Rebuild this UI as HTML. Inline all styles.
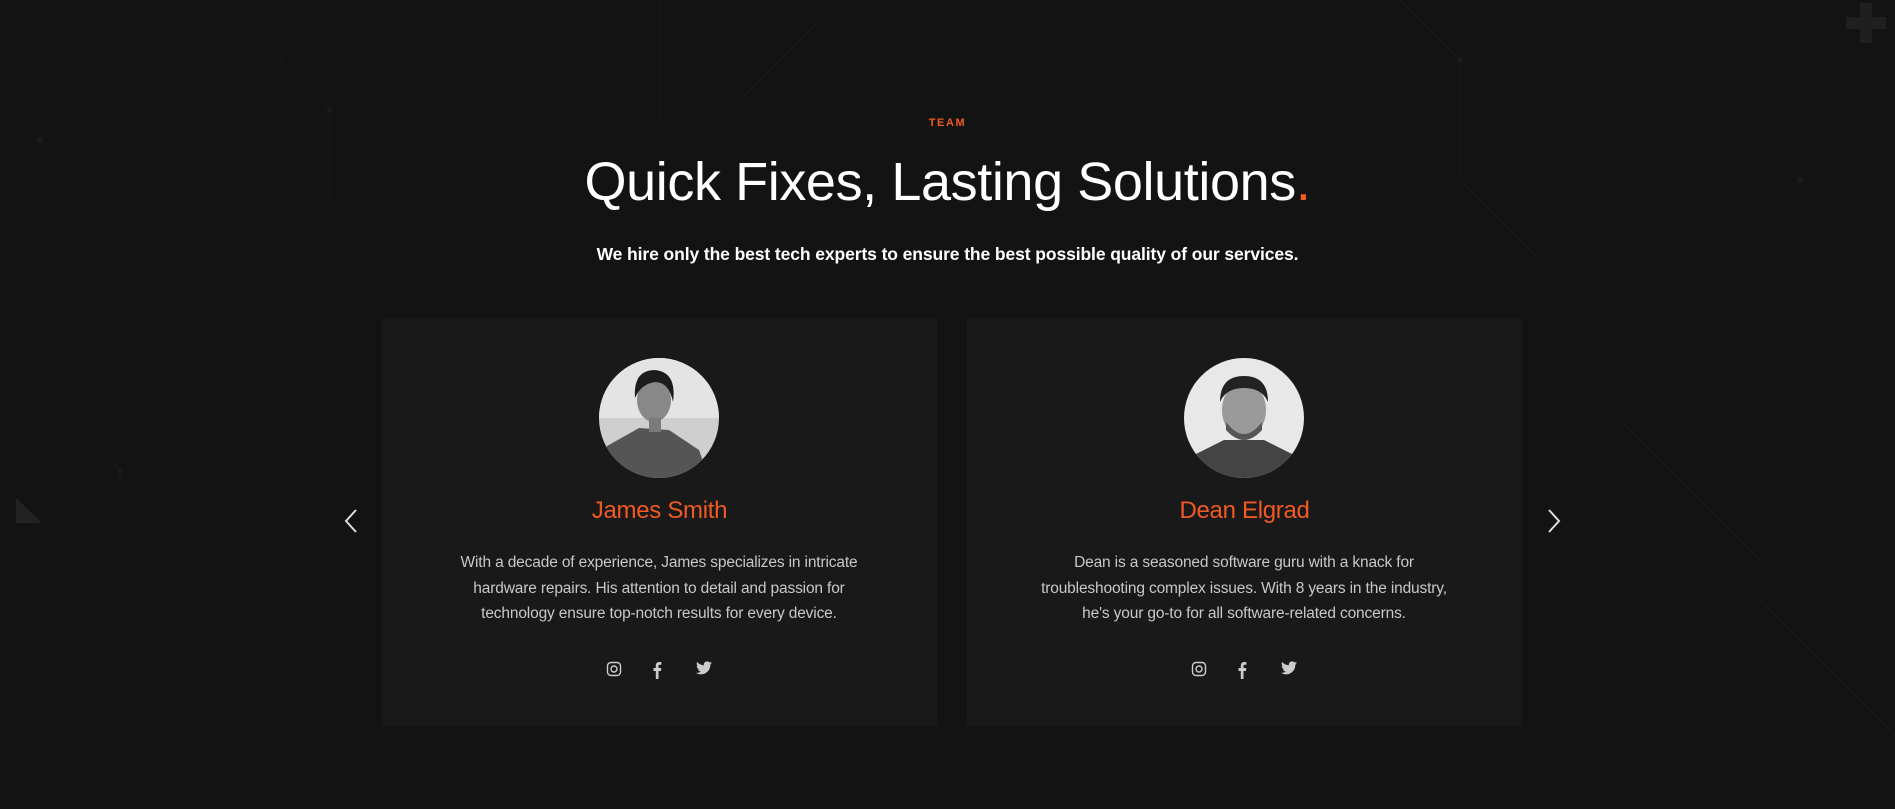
<!DOCTYPE html>
<html><head><meta charset="utf-8"><style>
*{margin:0;padding:0;box-sizing:border-box}
html,body{width:1895px;height:809px;overflow:hidden;background:#131313;font-family:"Liberation Sans",sans-serif}
.bg{position:absolute;left:0;top:0}
.team{position:absolute;top:117px;left:0;width:1895px;text-align:center;color:#f05a22;font-size:11px;font-weight:bold;letter-spacing:1.6px}
h1{position:absolute;top:150px;left:0;width:1895px;text-align:center;color:#fff;font-weight:normal;font-size:54px;letter-spacing:-0.4px;line-height:64px}
h1 span{color:#f05a22}
.sub{position:absolute;top:244px;left:0;width:1895px;text-align:center;color:#fff;font-size:17.5px;font-weight:bold;letter-spacing:-0.1px}
.card{position:absolute;top:318px;width:555px;height:408px;background:#191919;text-align:center}
.av{position:absolute;left:217px;top:40px;width:120px;height:120px;border-radius:50%;overflow:hidden}
.name{position:absolute;top:179px;left:0;width:100%;color:#f05a22;font-size:24px;letter-spacing:-0.3px}
.txt{position:absolute;top:232px;left:62px;width:430px;color:#c8c8c8;font-size:15.5px;line-height:25.5px;letter-spacing:-0.15px}
.soc{position:absolute;top:343px;left:0;width:100%;height:20px}
.soc svg{position:absolute;top:0}
.arr{position:absolute;top:508px}
</style></head><body>
<svg class="bg" width="1895" height="809">
<g stroke="#181818" stroke-width="1.5" fill="none">
<path d="M280 0 V60 L330 110 V200"/><path d="M120 60 L40 140 V260"/><path d="M0 350 L120 470 V620"/>
<path d="M1400 0 L1460 60 V180 L1540 260"/><path d="M1700 80 L1800 180 V320"/><path d="M1620 420 L1760 560 V700"/>
<path d="M660 0 V120"/><path d="M740 100 L820 20"/><path d="M1760 600 L1895 735"/>
</g>
<g fill="#1b1b1b"><circle cx="330" cy="110" r="3"/><circle cx="40" cy="140" r="3"/><circle cx="1460" cy="60" r="3"/><circle cx="1800" cy="180" r="3"/><circle cx="120" cy="470" r="3"/></g>
<path d="M1860 3 h12 v14 h14 v12 h-14 v14 h-12 v-14 h-14 v-12 h14z" fill="#1f1f1f"/>
<path d="M16 498 L42 523 L16 523z" fill="#222"/>
</svg>
<div class="team">TEAM</div>
<h1>Quick Fixes, Lasting Solutions<span>.</span></h1>
<div class="sub">We hire only the best tech experts to ensure the best possible quality of our services.</div>

<svg class="arr" style="left:344px" width="14" height="26" viewBox="0 0 14 26"><path d="M12 2 L2 13 L12 24" stroke="#ddd" stroke-width="2" fill="none"/></svg>
<svg class="arr" style="left:1547px" width="14" height="26" viewBox="0 0 14 26"><path d="M2 2 L12 13 L2 24" stroke="#ddd" stroke-width="2" fill="none"/></svg>

<div class="card" style="left:382px">
<div class="av"><svg width="120" height="120"><rect width="120" height="120" fill="#cfcfcf"/><rect x="0" y="0" width="120" height="60" fill="#e4e4e4"/><path d="M0 120 L8 88 L40 70 L70 72 L100 92 L110 120z" fill="#555"/><ellipse cx="55" cy="42" rx="17" ry="22" fill="#888"/><path d="M36 40 Q34 12 56 12 Q78 14 74 44 Q70 24 56 24 Q42 26 36 40z" fill="#1c1c1c"/><rect x="50" y="60" width="12" height="14" fill="#7a7a7a"/></svg></div>
<div class="name">James Smith</div>
<div class="txt">With a decade of experience, James specializes in intricate hardware repairs. His attention to detail and passion for technology ensure top-notch results for every device.</div>
<div class="soc">
<svg style="left:224px" width="16" height="16" viewBox="0 0 16 16"><rect x="1.5" y="1.5" width="13" height="13" rx="3.5" stroke="#ccc" stroke-width="1.4" fill="none"/><circle cx="8" cy="8" r="3" stroke="#ccc" stroke-width="1.4" fill="none"/></svg>
<svg style="left:270px" width="10" height="18" viewBox="0 0 10 18"><path d="M6.5 18 V10 H9 L9.3 7 H6.5 V5.2 C6.5 4.4 6.8 3.8 8 3.8 H9.4 V1.2 C9 1.1 8.2 1 7.3 1 5.3 1 3.8 2.2 3.8 4.6 V7 H1.5 V10 H3.8 V18z" fill="#ccc"/></svg>
<svg style="left:314px" width="16" height="14" viewBox="0 0 24 20"><path d="M24 2.4c-.9.4-1.8.6-2.8.8 1-.6 1.8-1.6 2.2-2.7-1 .6-2 1-3.1 1.2C19.3.6 18 0 16.6 0c-2.7 0-4.9 2.2-4.9 4.9 0 .4 0 .8.1 1.1C7.7 5.8 4.1 3.9 1.7.9c-.4.7-.7 1.6-.7 2.5 0 1.7.9 3.2 2.2 4.1-.8 0-1.6-.2-2.200-.6v.1c0 2.4 1.7 4.4 3.9 4.8-.4.1-.8.2-1.3.2-.3 0-.6 0-.9-.1.6 2 2.4 3.4 4.6 3.4-1.7 1.3-3.8 2.1-6.1 2.1-.4 0-.8 0-1.2-.1 2.2 1.4 4.8 2.2 7.5 2.2 9.1 0 14-7.5 14-14v-.6c1-.7 1.8-1.6 2.5-2.5z" fill="#ccc"/></svg>
</div>
</div>

<div class="card" style="left:967px">
<div class="av"><svg width="120" height="120"><rect width="120" height="120" fill="#e8e8e8"/><path d="M5 120 L12 96 L40 82 L80 82 L108 96 L115 120z" fill="#444"/><ellipse cx="60" cy="52" rx="22" ry="28" fill="#9a9a9a"/><path d="M36 44 Q36 18 60 18 Q84 18 84 44 Q78 30 60 30 Q42 30 36 44z" fill="#222"/><path d="M42 64 Q60 88 78 64 L78 72 Q60 92 42 72z" fill="#555"/></svg></div>
<div class="name">Dean Elgrad</div>
<div class="txt">Dean is a seasoned software guru with a knack for troubleshooting complex issues. With 8 years in the industry, he's your go-to for all software-related concerns.</div>
<div class="soc">
<svg style="left:224px" width="16" height="16" viewBox="0 0 16 16"><rect x="1.5" y="1.5" width="13" height="13" rx="3.5" stroke="#ccc" stroke-width="1.4" fill="none"/><circle cx="8" cy="8" r="3" stroke="#ccc" stroke-width="1.4" fill="none"/></svg>
<svg style="left:270px" width="10" height="18" viewBox="0 0 10 18"><path d="M6.5 18 V10 H9 L9.3 7 H6.5 V5.2 C6.5 4.4 6.8 3.8 8 3.8 H9.4 V1.2 C9 1.1 8.2 1 7.3 1 5.3 1 3.8 2.2 3.8 4.6 V7 H1.5 V10 H3.8 V18z" fill="#ccc"/></svg>
<svg style="left:314px" width="16" height="14" viewBox="0 0 24 20"><path d="M24 2.4c-.9.4-1.8.6-2.8.8 1-.6 1.8-1.6 2.2-2.7-1 .6-2 1-3.1 1.2C19.3.6 18 0 16.6 0c-2.7 0-4.9 2.2-4.9 4.9 0 .4 0 .8.1 1.1C7.7 5.8 4.1 3.9 1.7.9c-.4.7-.7 1.6-.7 2.5 0 1.7.9 3.2 2.2 4.1-.8 0-1.6-.2-2.2-.6v.1c0 2.4 1.7 4.4 3.9 4.8-.4.1-.8.2-1.3.2-.3 0-.6 0-.9-.1.6 2 2.4 3.4 4.6 3.4-1.7 1.3-3.8 2.1-6.1 2.1-.4 0-.8 0-1.2-.1 2.2 1.4 4.8 2.2 7.5 2.2 9.1 0 14-7.5 14-14v-.6c1-.7 1.8-1.6 2.5-2.5z" fill="#ccc"/></svg>
</div>
</div>
</body></html>
